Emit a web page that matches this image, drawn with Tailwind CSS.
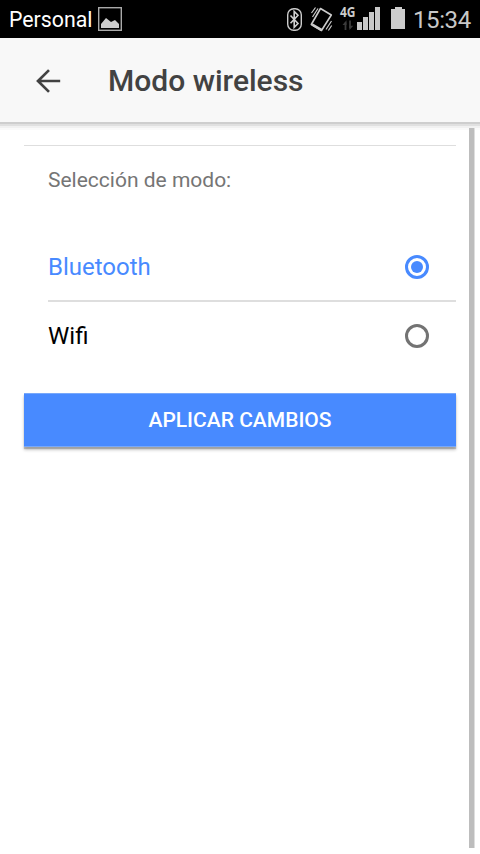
<!DOCTYPE html>
<html lang="es">
<head>
<meta charset="utf-8">
<meta name="viewport" content="width=device-width, initial-scale=1">
<title>Modo wireless</title>
<script src="https://cdn.jsdelivr.net/npm/@tailwindcss/browser@4"></script>
</head>
<body class="h-[854px] w-[480px] overflow-hidden bg-white font-[Roboto,sans-serif]">
<div class="flex h-full flex-col">
  <div class="flex h-[38px] shrink-0 items-center bg-black pl-[9px] text-white">
    <span class="w-[89px] shrink-0 whitespace-nowrap pt-[2px] text-[21.3px] leading-[38px]">Personal</span>
    <svg class="h-[38px] w-[24px] shrink-0" viewBox="98 0 24 38"><rect x="98.7" y="7.7" width="22.6" height="22.6" fill="none" stroke="#aaa" stroke-width="1.4"/><path d="M101 28v-4l5-6 5 4 4-2 4 4v4z" fill="#ccc"/></svg>
    <svg class="ml-[164px] h-[38px] w-[122px] shrink-0" viewBox="286 0 122 38" fill="none">
      <rect x="287.7" y="8.7" width="13.6" height="21.6" rx="6" stroke="#ccc" stroke-width="1.4"/>
      <path d="M290.5 15.5l7.5 8-3.8 3.8V11.5l3.8 3.8-7.5 8" stroke="#d0d0d0" stroke-width="1.6"/>
      <path d="M320.5 8.5L331.3 15l-9.8 15.5-10.2-6z" stroke="#ccc" stroke-width="1.6" stroke-linejoin="round"/>
      <path d="M312.2 24.5l9.6 5.6" stroke="#ccc" stroke-width="2.6"/>
      <path d="M311.5 13l4-5.5M312.5 17l5.5-8.5M331.5 21l-5.5 8.5M331.7 25.5l-3.3 5" stroke="#ccc" stroke-width="1.2"/>
      <text x="340" y="17.3" font-family="Open Sans, sans-serif" font-size="13.5" font-weight="700" fill="#ccc" textLength="15.5" lengthAdjust="spacingAndGlyphs">4G</text>
      <path d="M345.5 30v-7.5M350 20.5v7.5" stroke="#3b3b3b" stroke-width="1.8"/><path d="M342.5 25l4-4.7v4.7zM349 25.7h4.3L349.5 30z" fill="#3b3b3b"/>
      <path d="M357 22h5v8h-5zM363 17h5v13h-5zM369 12h5v18h-5zM375 7h5v23h-5z" fill="#c8c8c8"/>
      <path d="M391 9h4V7h7v2h3v20h-14z" fill="#ccc"/>
    </svg>
    <span class="ml-[5px] whitespace-nowrap pt-[2px] text-[24px] leading-[38px] tracking-[-0.4px] text-[#c8c8c8]">15:34</span>
  </div>
  <header class="relative z-10 flex h-[84px] shrink-0 items-center bg-[#f8f8f8] pl-9 shadow-[0_2px_0_#cecece,0_4px_0_#e0e0e0,0_6px_0_#f1f1f1,0_8px_0_#fafafa]">
    <svg class="mt-px h-6 w-[25px] shrink-0" viewBox="0 0 25 24" fill="none" stroke="#424242" stroke-width="2.7"><path d="M13 1.1L2 12l11 10.9M2 12h22.2"/></svg>
    <h1 class="ml-[47px] pt-[2px] text-[30px] font-medium leading-[36px] text-[#424242]">Modo wireless</h1>
  </header>
  <div class="flex min-h-0 grow pb-[6px]">
    <main class="w-[469px] pl-6 pr-[13px] pt-[23px]">
      <section class="border-t border-[#dedede]">
        <h2 class="ml-6 pt-[20px] text-[21px] leading-[28px] text-[#757575]">Selección de modo:</h2>
        <div class="ml-6 mt-[40px] flex h-[68px] items-center justify-between border-b-2 border-[#dedede] pr-[27px]">
          <span class="text-2xl leading-[30px] text-[#488aff]">Bluetooth</span>
          <span class="flex size-6 items-center justify-center rounded-full border-3 border-[#488aff]"><span class="size-3 rounded-full bg-[#488aff]"></span></span>
        </div>
        <div class="ml-6 flex h-[68px] items-center justify-between pr-[27px]">
          <span class="text-2xl leading-[30px] text-black">Wifi</span>
          <span class="size-6 rounded-full border-3 border-[#737373]"></span>
        </div>
      </section>
      <button class="mt-[23px] block h-[54px] w-full border-y border-[#78a8fa] bg-[#488aff] text-[21px] font-medium leading-[52px] text-white shadow-[0_3px_3px_rgba(0,0,0,0.22),0_2px_1px_rgba(0,0,0,0.2)]">APLICAR CAMBIOS</button>
    </main>
    <div class="relative z-20 mt-[6px] w-[6px] border-r border-[#dedede] bg-[#bdbdbd]"></div>
  </div>
</div>
</body>
</html>
